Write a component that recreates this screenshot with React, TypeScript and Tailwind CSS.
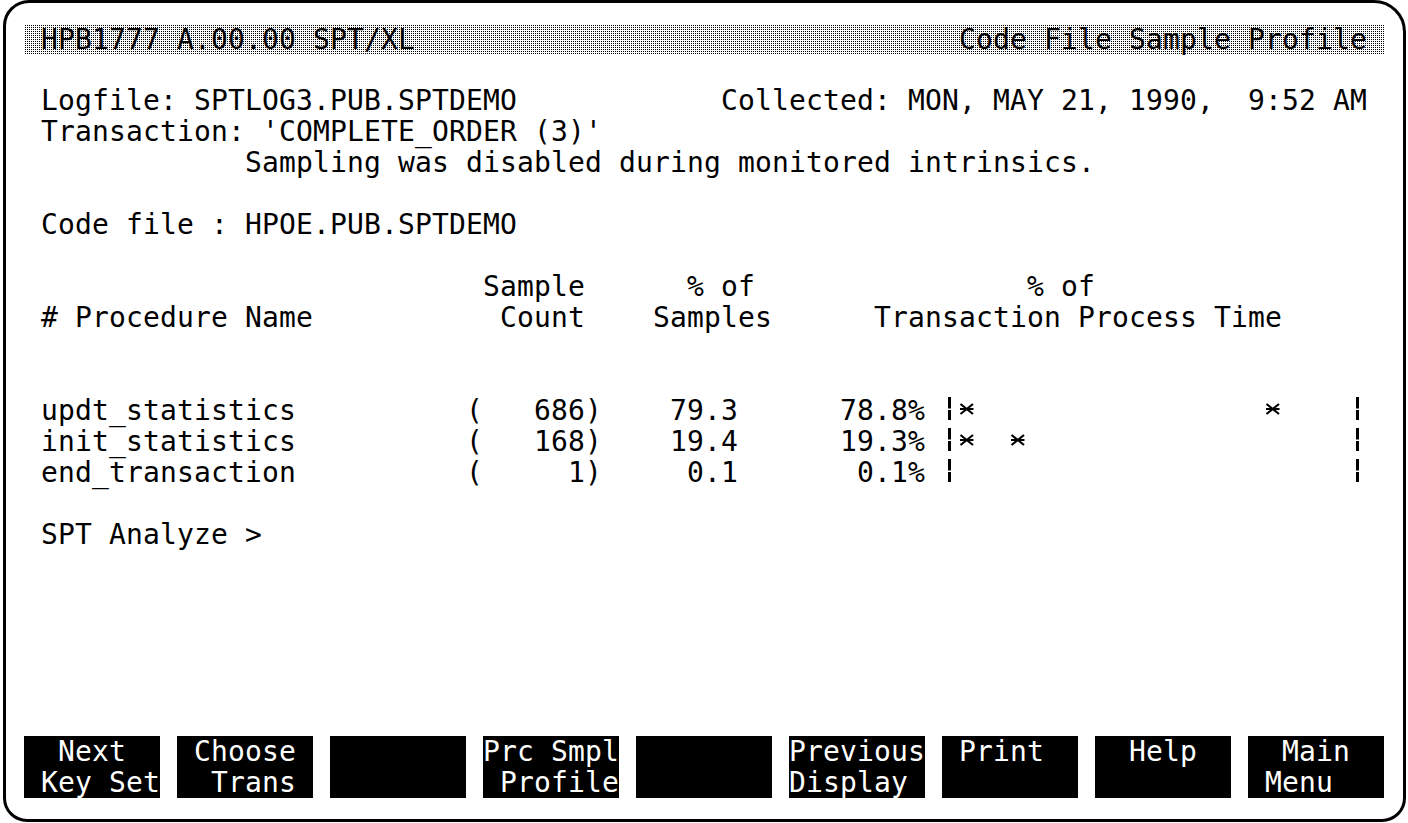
import React from "react";

function build(segs: [number, string][]): string {
  let s = "";
  for (const [col, t] of segs) {
    while (s.length < col) s += " ";
    s += t;
  }
  return s;
}

const Star = () => (
  <span className="inline-block w-[17px] h-[31px] align-top">
    <svg width="17" height="31" viewBox="0 0 17 31" className="block">
      <path d="M1.5 9 L14 19 M14 9 L1.5 19 M1 14 L14.5 14" stroke="#000" strokeWidth="2.2" fill="none" />
    </svg>
  </span>
);

const Bar = () => (
  <span className="inline-block w-[17px] h-[31px] align-top">
    <svg width="17" height="31" viewBox="0 0 17 31" className="block">
      <rect x="6" y="2" width="3" height="11.5" fill="#000" />
      <rect x="6" y="15" width="3" height="10" fill="#000" />
    </svg>
  </span>
);

function Line({ text }: { text: string }) {
  const parts = text.split(/([*|])/);
  return (
    <div className="h-[31px] leading-[31px] whitespace-pre">
      {parts.map((p, i) =>
        p === "*" ? <Star key={i} /> : p === "|" ? <Bar key={i} /> : <React.Fragment key={i}>{p}</React.Fragment>
      )}
    </div>
  );
}

const rows: string[] = [
  "",
  build([[1, "Logfile: SPTLOG3.PUB.SPTDEMO"], [41, "Collected: MON, MAY 21, 1990,  9:52 AM"]]),
  build([[1, "Transaction: 'COMPLETE_ORDER (3)'"]]),
  build([[13, "Sampling was disabled during monitored intrinsics."]]),
  "",
  build([[1, "Code file : HPOE.PUB.SPTDEMO"]]),
  "",
  build([[27, "Sample"], [39, "% of"], [59, "% of"]]),
  build([[1, "# Procedure Name"], [28, "Count"], [37, "Samples"], [50, "Transaction Process Time"]]),
  "",
  "",
  build([[1, "updt_statistics"], [26, "(   686)"], [38, "79.3"], [48, "78.8%"], [54, "|*"], [73, "*"], [78, "|"]]),
  build([[1, "init_statistics"], [26, "(   168)"], [38, "19.4"], [48, "19.3%"], [54, "|*"], [58, "*"], [78, "|"]]),
  build([[1, "end_transaction"], [26, "(     1)"], [39, "0.1"], [49, "0.1%"], [54, "|"], [78, "|"]]),
  "",
  build([[1, "SPT Analyze >"]]),
  "",
  "",
  "",
  "",
  "",
  "",
];

const keys: [string, string][] = [
  ["  Next", " Key Set"],
  [" Choose", "  Trans"],
  ["", ""],
  ["Prc Smpl", " Profile"],
  ["", ""],
  ["Previous", "Display"],
  [" Print", ""],
  ["  Help", ""],
  ["  Main", " Menu"],
];

export default function App() {
  return (
    <div className="w-[1408px] h-[823px] bg-white overflow-hidden">
      <div className="ml-[3px] w-[1403px] h-[822px] border-[3px] border-black rounded-tl-[26px] rounded-tr-[32px] rounded-b-[24px] pl-[18px] pt-[20px] font-['DejaVu_Sans_Mono',monospace] text-[28px] tracking-[0.143px] text-black">
        <div className="w-[1360px]">
          <div className="h-[31px] flex items-center">
            <div className="w-full h-[29px] mt-[1px] leading-[29px] whitespace-pre bg-[repeating-conic-gradient(#000_0_25%,#fff_0_100%)] bg-[length:2px_2px]">
              {build([[1, "HPB1777 A.00.00 SPT/XL"], [55, "Code File Sample Profile"]])}
            </div>
          </div>
          {rows.map((r, i) => (
            <Line key={i} text={r} />
          ))}
          <div className="flex gap-[17px]">
            {keys.map(([a, b], i) => (
              <div key={i} className="w-[136px] h-[62px] bg-black text-white whitespace-pre">
                <div className="h-[31px] leading-[31px]">{a}</div>
                <div className="h-[31px] leading-[31px]">{b}</div>
              </div>
            ))}
          </div>
        </div>
      </div>
    </div>
  );
}
